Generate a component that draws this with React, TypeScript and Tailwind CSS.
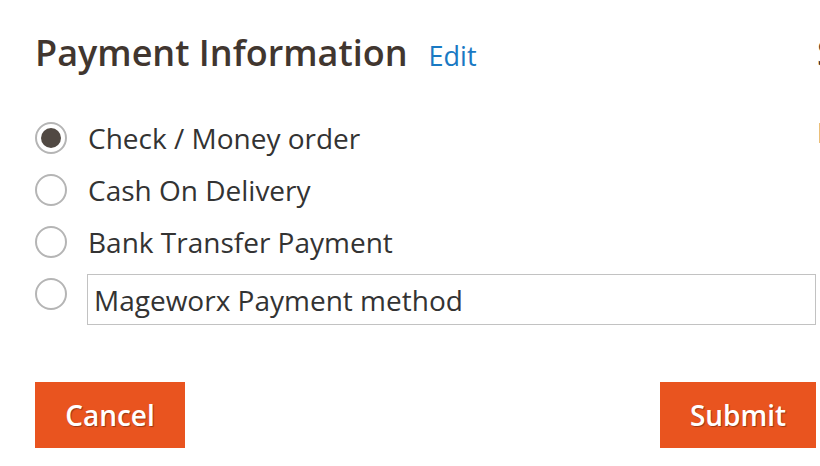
import { useState } from 'react';

const methods = ['Check / Money order', 'Cash On Delivery', 'Bank Transfer Payment'];

function Radio({ checked, onClick }: { checked: boolean; onClick: () => void }) {
  return (
    <button
      type="button"
      onClick={onClick}
      className="w-[32px] h-[32px] rounded-full border-2 border-[#b5b5b5] bg-white flex items-center justify-center shrink-0"
    >
      {checked && <span className="w-[20px] h-[20px] rounded-full bg-[#514943]" />}
    </button>
  );
}

export default function App() {
  const [selected, setSelected] = useState(0);
  const [custom, setCustom] = useState('Mageworx Payment method');

  return (
    <div className="w-[820px] h-[466px] overflow-hidden bg-white font-['Open_Sans',sans-serif] flex">
      <div className="w-[816px] shrink-0 pl-[35px] pt-[29px]">
        <div className="flex items-baseline gap-[21px]">
          <h2 className="text-[36px] leading-[48px] font-semibold text-[#41362f]">Payment Information</h2>
          <a href="#" className="text-[27px] text-[#1979c3]">Edit</a>
        </div>

        <div className="mt-[45px] flex flex-col gap-[20px]">
          {methods.map((m, i) => (
            <label key={m} className="flex items-center gap-[21px] h-[32px] cursor-pointer">
              <Radio checked={selected === i} onClick={() => setSelected(i)} />
              <span className="text-[28px] text-[#333333]">{m}</span>
            </label>
          ))}
          <div className="flex items-start gap-[20px] -mt-[4px]">
            <div className="pt-[4px]">
              <Radio checked={selected === 3} onClick={() => setSelected(3)} />
            </div>
            <input
              value={custom}
              onChange={(e) => setCustom(e.target.value)}
              className="flex-1 h-[51px] border border-[#c2c2c2] px-[6px] text-[28px] text-[#333333] outline-none"
            />
          </div>
        </div>

        <div className="mt-[57px] flex justify-between">
          <button className="w-[150px] h-[66px] bg-[#e9541f] text-white text-[28px] font-semibold [text-shadow:1px_1px_1px_rgba(0,0,0,0.35)]">
            Cancel
          </button>
          <button className="w-[156px] h-[66px] bg-[#e9541f] text-white text-[28px] font-semibold [text-shadow:1px_1px_1px_rgba(0,0,0,0.35)]">
            Submit
          </button>
        </div>
      </div>

      <div className="pl-[1px] pt-[29px] whitespace-nowrap">
        <div className="text-[36px] leading-[48px] font-semibold text-[#41362f]">Shipping Address</div>
        <div className="mt-[34px] text-[28px] text-[#333333]">Items in Cart</div>
      </div>
    </div>
  );
}
